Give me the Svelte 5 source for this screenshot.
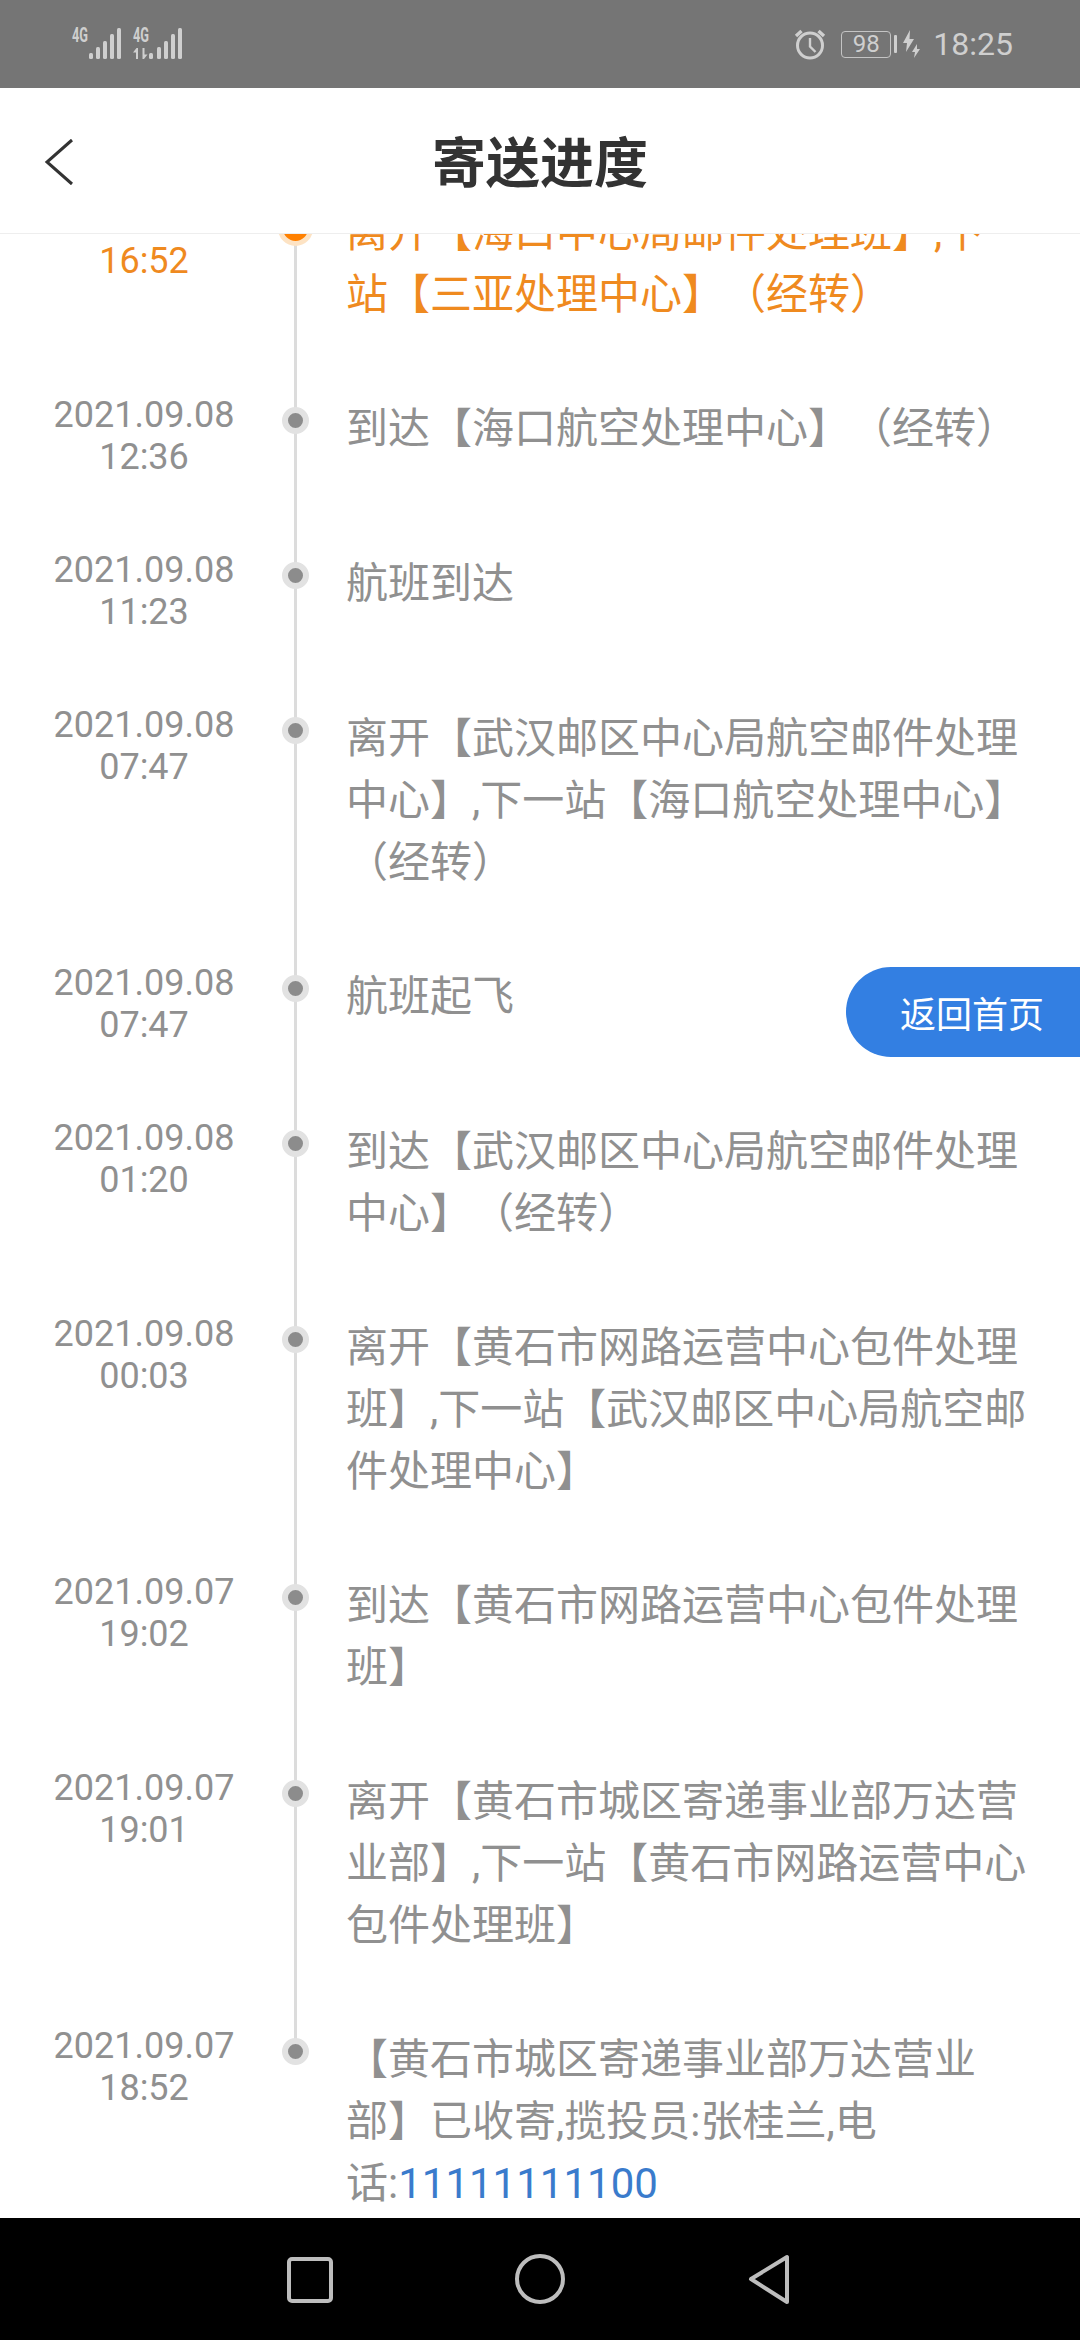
<script>
  const rows = [
    { date: '2021.09.08', time: '16:52', text: '离开【海口中心局邮件处理班】,下一站【三亚处理中心】（经转）', active: true },
    { date: '2021.09.08', time: '12:36', text: '到达【海口航空处理中心】（经转）' },
    { date: '2021.09.08', time: '11:23', text: '航班到达' },
    { date: '2021.09.08', time: '07:47', text: '离开【武汉邮区中心局航空邮件处理中心】,下一站【海口航空处理中心】（经转）' },
    { date: '2021.09.08', time: '07:47', text: '航班起飞' },
    { date: '2021.09.08', time: '01:20', text: '到达【武汉邮区中心局航空邮件处理中心】（经转）' },
    { date: '2021.09.08', time: '00:03', text: '离开【黄石市网路运营中心包件处理班】,下一站【武汉邮区中心局航空邮件处理中心】' },
    { date: '2021.09.07', time: '19:02', text: '到达【黄石市网路运营中心包件处理班】' },
    { date: '2021.09.07', time: '19:01', text: '离开【黄石市城区寄递事业部万达营业部】,下一站【黄石市网路运营中心包件处理班】' },
    { date: '2021.09.07', time: '18:52', text: '【黄石市城区寄递事业部万达营业部】已收寄,揽投员:张桂兰,电话:', phone: '11111111100', last: true }
  ];
  const bars1 = [[89, 53], [96, 47], [103, 41], [110, 34], [117, 28]];
  const bars2 = [[149, 53], [157, 47], [164, 41], [171, 34], [178, 28]];
</script>

<div class="screen">
  <div class="status">
    <svg class="signal" width="116" height="38" viewBox="68 25 116 38">
      <text x="72" y="42" class="four" textLength="16" lengthAdjust="spacingAndGlyphs">4G</text>
      <text x="133" y="42" class="four" textLength="16" lengthAdjust="spacingAndGlyphs">4G</text>
      {#each [...bars1, ...bars2] as [x, top]}
        <rect {x} y={top} width="4" height={59 - top} rx="1.5" fill="#cfcfcf" />
      {/each}
      <path d="M133 52.500l3.500-4.500h1.500v11h-2v-6.500zM147.500 54.500l-3.500 4.500h-1.500v-11h2v6.500z" fill="#cfcfcf" />
    </svg>
    <div class="sys">
      <svg class="alarm" width="34" height="34" viewBox="0 0 34 34" fill="none" stroke="#cfcfcf">
        <circle cx="17" cy="18.500" r="12.500" stroke-width="3" />
        <path d="M17 11v8.500l5.500 5.500" stroke-width="2.400" />
        <path d="M3 9 8.500 4M31 9 25.500 4" stroke-width="3.400" />
      </svg>
      <div class="battery">98</div>
      <div class="nub"></div>
      <svg class="bolts" width="18" height="28" viewBox="0 0 18 28" fill="#cfcfcf">
        <path d="M7 0 0 13h4l-1 9 8-13H6.500zM14 14l-5 8h3l-1 6 6-9h-3z" />
      </svg>
      <span class="clock">18:25</span>
    </div>
  </div>

  <header class="head">
    <svg class="back" width="32" height="48" viewBox="0 0 32 48" fill="none" stroke="#333" stroke-width="3">
      <path d="M29 2 4 24l25 22" />
    </svg>
    <h1>寄送进度</h1>
  </header>

  <main class="track">
    <ul>
      {#each rows as r}
        <li class:active={r.active} class:last={r.last}>
          <div class="when"><div>{r.date}</div><div>{r.time}</div></div>
          <div class="axis"><span class="dot"></span></div>
          <div class="what">{r.text}{#if r.phone}<span class="phone">{r.phone}</span>{/if}</div>
        </li>
      {/each}
    </ul>
  </main>

  <nav class="nav">
    <svg width="1080" height="122" viewBox="0 0 1080 122" fill="none" stroke="#bdbdbd" stroke-width="4" stroke-linejoin="round">
      <rect x="289" y="41" width="42" height="42" rx="3" />
      <circle cx="540" cy="61" r="23" />
      <path d="M787 39v45L751 61z" />
    </svg>
  </nav>

  <button class="home">返回首页</button>
</div>

<style>
  :global(body) { margin: 0; background: #fff; }
  .screen {
    position: relative;
    width: 1080px;
    height: 2340px;
    overflow: hidden;
    display: flex;
    flex-direction: column;
    background: #fff;
    font-family: Roboto, "Noto Sans CJK SC", sans-serif;
    text-spacing-trim: space-all;
  }
  .status {
    flex: 0 0 88px;
    background: #757575;
    display: flex;
    align-items: center;
    justify-content: space-between;
    padding: 0 67px 0 68px;
    color: #cfcfcf;
  }
  .signal { display: block; }
  .four { font: 700 20px Roboto, sans-serif; fill: #cfcfcf; }
  .sys { display: flex; align-items: center; }
  .alarm { margin-right: 14px; }
  .battery {
    box-sizing: border-box;
    width: 50px;
    height: 27px;
    border: 1.500px solid #c4c4c4;
    border-radius: 4px;
    font-size: 24px;
    line-height: 24px;
    text-align: center;
    margin-right: 3px;
  }
  .nub { width: 3px; height: 18px; background: #cfcfcf; margin-right: 6px; border-radius: 1px; }
  .bolts { margin-right: 12px; }
  .clock { font-size: 32px; line-height: 38px; }

  .head {
    flex: 0 0 146px;
    box-sizing: border-box;
    border-bottom: 1px solid #eeeeee;
    display: flex;
    align-items: center;
    justify-content: center;
    position: relative;
  }
  .back { position: absolute; left: 43px; top: 50px; }
  h1 {
    margin: 8px 0 0;
    font-size: 54px;
    font-weight: 700;
    color: #333;
    line-height: 64px;
  }

  .track { flex: 1 1 0; overflow: hidden; min-height: 0; }
  ul { list-style: none; margin: -68px 0 0; padding: 0; }
  li { display: grid; grid-template-columns: 264px 62px 1fr; }
  .when {
    box-sizing: border-box;
    padding: 33px 0 39px 24px;
    text-align: center;
    font-size: 36px;
    line-height: 41.500px;
    color: #909090;
  }
  .axis { position: relative; display: flex; justify-content: center; }
  .axis::before {
    content: "";
    position: absolute;
    left: 30px;
    top: 0;
    bottom: 0;
    width: 3px;
    background: #dcdcdc;
  }
  .last .axis::before { bottom: auto; height: 50px; }
  .dot {
    position: relative;
    box-sizing: border-box;
    width: 27px;
    height: 27px;
    margin-top: 45px;
    border-radius: 50%;
    background: #8c8c8c;
    border: 6px solid #e2e2e2;
  }
  .what {
    box-sizing: border-box;
    margin-left: 20px;
    padding: 36px 0;
    width: 690px;
    font-size: 42px;
    line-height: 62px;
    color: #909090;
  }
  .active .when, .active .what { color: #ef8a1f; }
  .active .dot {
    width: 35px;
    height: 35px;
    background: #ff8000;
    border: 5px solid #fde3c4;
  }
  .phone { color: #3a7bcc; }

  .nav { flex: 0 0 122px; background: #000; }
  .nav svg { display: block; }

  .home {
    position: absolute;
    top: 967px;
    right: 0;
    width: 234px;
    height: 90px;
    box-sizing: border-box;
    padding: 0 0 0 54px;
    text-align: left;
    border: 0;
    border-radius: 45px 0 0 45px;
    background: #337fe2;
    color: #fff;
    font: 400 36px "Noto Sans CJK SC", sans-serif;
  }
</style>
